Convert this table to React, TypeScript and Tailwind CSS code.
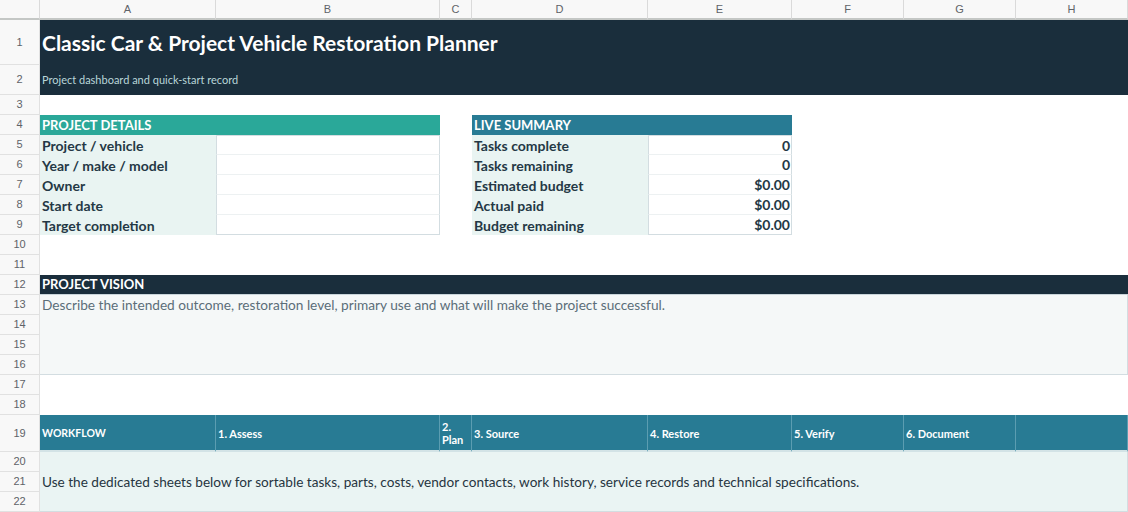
import React from "react";

const cols = ["A", "B", "C", "D", "E", "F", "G", "H"];

const details = ["Project / vehicle", "Year / make / model", "Owner", "Start date", "Target completion"];
const summary: [string, string][] = [
  ["Tasks complete", "0"],
  ["Tasks remaining", "0"],
  ["Estimated budget", "$0.00"],
  ["Actual paid", "$0.00"],
  ["Budget remaining", "$0.00"],
];
const steps = ["1. Assess", "2. Plan", "3. Source", "4. Restore", "5. Verify", "6. Document", ""];

function RowNum({ n }: { n: number }) {
  return (
    <div className="flex items-center justify-center border-r border-b border-[#e1e1e1] bg-[#f8f8f8] font-['Liberation_Sans',Arial,sans-serif] text-[11px] text-[#5f6368]">
      {n}
    </div>
  );
}

function Blank({ n }: { n: number }) {
  return (
    <>
      <RowNum n={n} />
      <div className="col-span-8 bg-white" />
    </>
  );
}

export default function App() {
  return (
    <div className="h-[512px] w-[1128px] overflow-hidden bg-white font-['Lato','Noto_Sans',sans-serif]">
      <div className="grid grid-cols-[40px_176px_224px_32px_176px_144px_112px_112px_112px] grid-rows-[20px_45px_30px_20px_20px_20px_20px_20px_20px_20px_20px_20px_20px_20px_20px_20px_20px_20px_20px_37px_20px_20px_20px]">
        {/* column letters */}
        <div className="border-r border-b-2 border-r-[#dadada] border-b-[#c4c7c5] bg-[#f8f8f8]" />
        {cols.map((c) => (
          <div
            key={c}
            className="flex items-center justify-center border-r border-b-2 border-r-[#dadada] border-b-[#c4c7c5] bg-[#f8f8f8] font-['Liberation_Sans',Arial,sans-serif] text-[11px] text-[#5f6368]"
          >
            {c}
          </div>
        ))}

        {/* title */}
        <RowNum n={1} />
        <div className="col-span-8 flex items-center bg-[#1a2e3c] pl-[2px] text-[21px] font-bold text-white">
          Classic Car &amp; Project Vehicle Restoration Planner
        </div>
        <RowNum n={2} />
        <div className="col-span-8 flex items-center bg-[#1a2e3c] pl-[2px] text-[11px] text-[#b9d6d9]">
          Project dashboard and quick-start record
        </div>

        <Blank n={3} />

        {/* section headers */}
        <RowNum n={4} />
        <div className="col-span-2 flex items-center bg-[#2aa899] pl-[2px] pt-[1px] text-[13px] font-bold text-white">
          PROJECT DETAILS
        </div>
        <div />
        <div className="col-span-2 flex items-center bg-[#287b94] pl-[2px] pt-[1px] text-[13px] font-bold text-white">
          LIVE SUMMARY
        </div>
        <div className="col-span-3" />

        {details.map((label, i) => (
          <React.Fragment key={label}>
            <RowNum n={5 + i} />
            <div className="flex items-center bg-[#e9f4f2] pl-[2px] text-[14px] font-bold text-[#243845]">
              {label}
            </div>
            <div
              className={`border-x border-b border-x-[#d3dde1] ${i === 4 ? "border-b-[#d3dde1]" : "border-b-[#edf1f2]"} ${i === 0 ? "border-t border-t-[#d3dde1]" : ""} bg-white`}
            />
            <div />
            <div className="flex items-center bg-[#e9f4f2] pl-[2px] text-[14px] font-bold text-[#243845]">
              {summary[i][0]}
            </div>
            <div
              className={`flex items-center justify-end border-x border-b border-x-[#d3dde1] ${i === 4 ? "border-b-[#d3dde1]" : "border-b-[#edf1f2]"} ${i === 0 ? "border-t border-t-[#d3dde1]" : ""} bg-white pr-[1px] text-[14px] font-bold text-[#243845]`}
            >
              {summary[i][1]}
            </div>
            <div className="col-span-3" />
          </React.Fragment>
        ))}

        <Blank n={10} />
        <Blank n={11} />

        {/* vision */}
        <RowNum n={12} />
        <div className="col-span-8 flex items-center border-b border-[#c9d5da] bg-[#1a2e3c] pl-[2px] pt-[1px] text-[13px] font-bold text-white">
          PROJECT VISION
        </div>
        <RowNum n={13} />
        <div className="col-span-8 row-span-4 border-r border-b border-[#d3dde1] bg-[#f5f8f8] pl-[2px] pt-[1px] text-[13.66px] leading-[19px] text-[#5b6e78]">
          Describe the intended outcome, restoration level, primary use and what will make the project successful.
        </div>
        <RowNum n={14} />
        <RowNum n={15} />
        <RowNum n={16} />

        <Blank n={17} />
        <Blank n={18} />

        {/* workflow */}
        <RowNum n={19} />
        <div className="flex items-center border-r border-b-2 border-r-[#5b9db1] border-b-[#d3e3e6] bg-[#287b94] pl-[2px] pt-[3px] text-[10.5px] font-bold text-white">
          WORKFLOW
        </div>
        {steps.map((s, i) => (
          <div
            key={i}
            className="flex items-center border-r border-b-2 border-r-[#5b9db1] border-b-[#d3e3e6] bg-[#287b94] pl-[2px] pt-[1px] text-[11px] leading-[13px] font-bold text-white"
          >
            {s === "2. Plan" ? (
              <span>
                2.
                <br />
                Plan
              </span>
            ) : (
              s
            )}
          </div>
        ))}

        <RowNum n={20} />
        <div className="col-span-8 row-span-3 flex items-center border-r border-b border-[#d3dde1] bg-[#eaf4f3] pl-[2px] pt-[1px] text-[13.6px] text-[#26353f]">
          Use the dedicated sheets below for sortable tasks, parts, costs, vendor contacts, work history, service records and technical specifications.
        </div>
        <RowNum n={21} />
        <RowNum n={22} />
      </div>
    </div>
  );
}
